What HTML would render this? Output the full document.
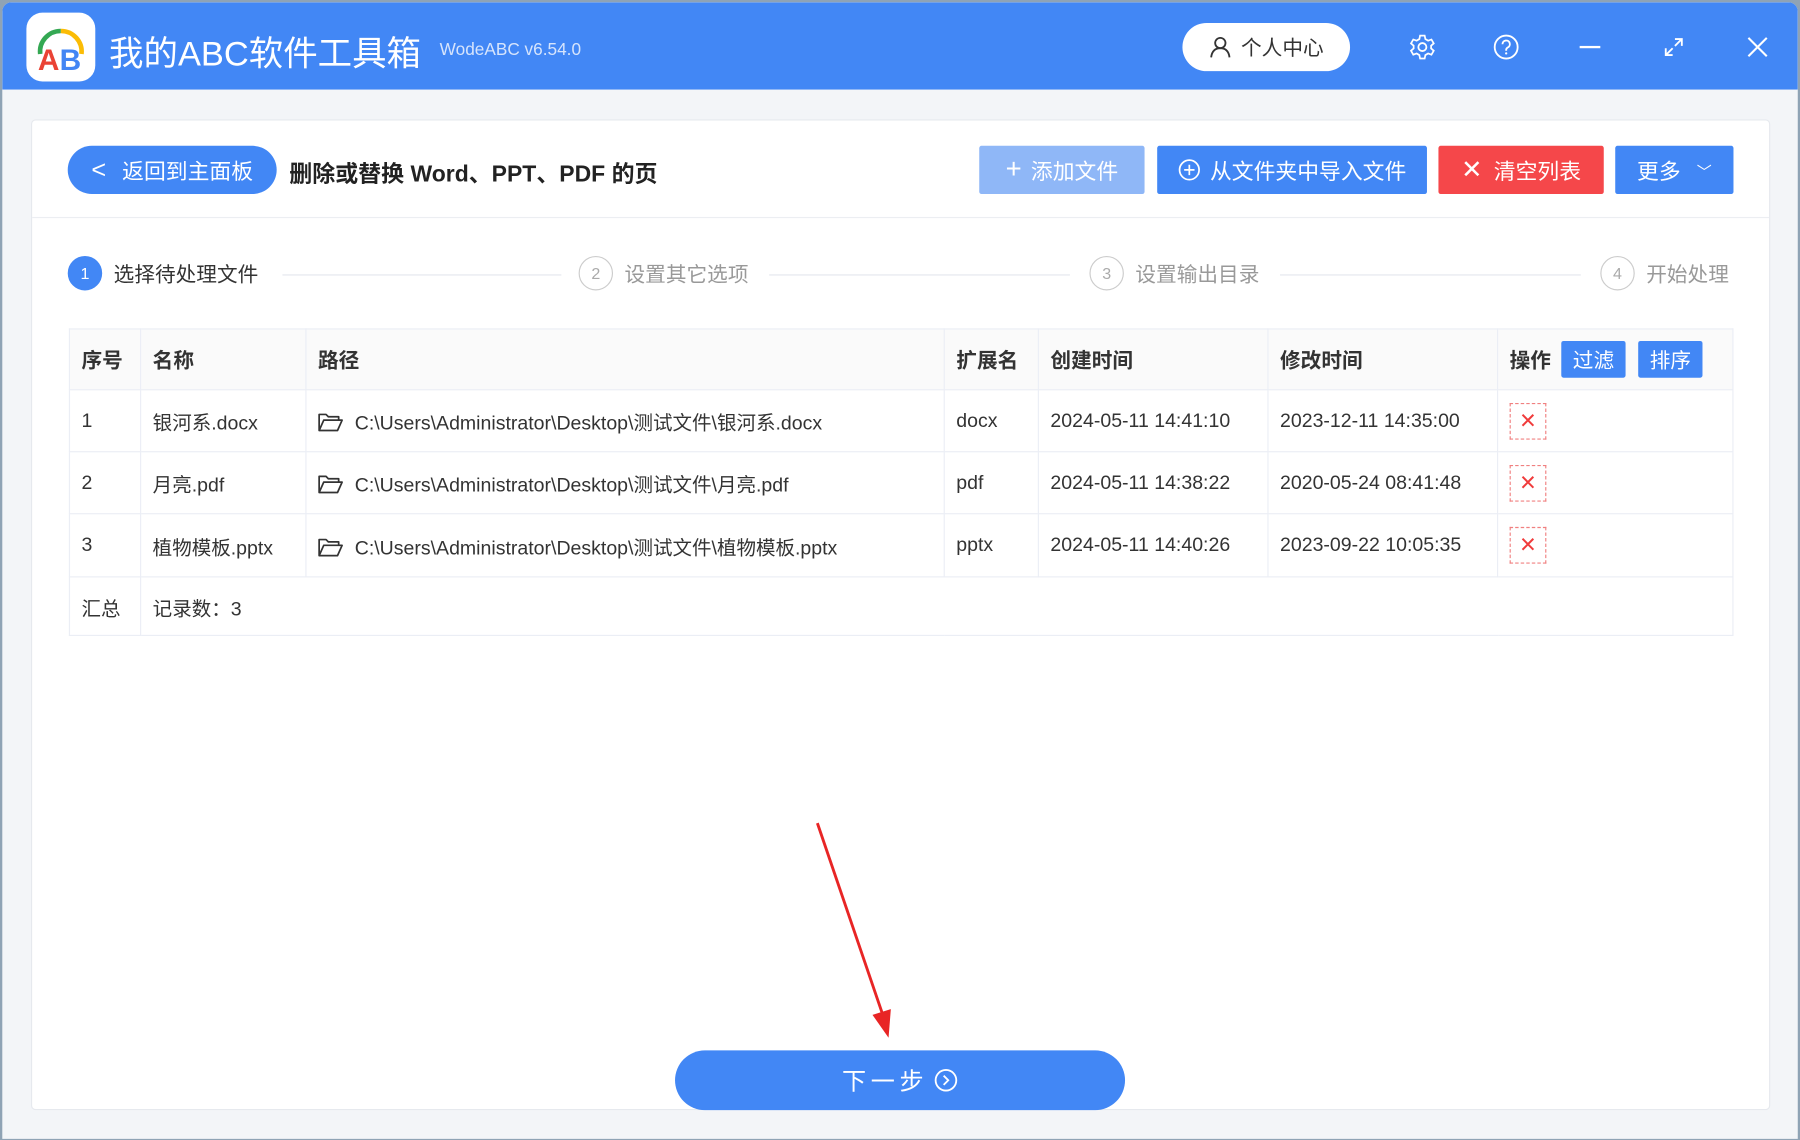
<!DOCTYPE html>
<html><head><meta charset="utf-8"><style>
*{margin:0;padding:0;box-sizing:border-box}
html,body{width:1800px;height:1140px;overflow:hidden;background:#8fa3b5}
#w{width:1568px;height:993px;transform:scale(1.148);transform-origin:0 0;position:relative;font-family:"Liberation Sans","Noto Sans CJK SC",sans-serif;color:#333}
.win{position:absolute;left:2px;top:2px;width:1564px;height:990px;background:#f3f5f8;border-radius:8px 8px 0 0;overflow:hidden}
.hd{position:absolute;left:0;top:0;width:100%;height:76px;background:#4287f5}
.abs{position:absolute}
.card{position:absolute;left:25px;top:102px;width:1515px;height:863px;background:#fff;border:1px solid #e6e9ee;border-radius:4px}
.btn{position:absolute;height:42px;color:#fff;font-size:19px;display:flex;align-items:center;justify-content:center;border-radius:2px}
table{position:absolute;left:58px;top:284px;border-collapse:collapse;font-size:17px;color:#333}
td{border:1px solid #ebeef5;padding:0 10px;white-space:nowrap}
th{border:1px solid #ebeef5;padding:0 10px;text-align:left;font-weight:bold;background:#fafafa;height:53px;font-size:18px}
.x{display:inline-block;width:32px;height:32px;border:1px dashed #f08080;color:#f03b3b;text-align:center;line-height:30px;font-size:24px;vertical-align:middle}
.step{position:absolute;top:221px;font-size:18px;color:#999;display:flex;align-items:center}
.c{width:30px;height:30px;border-radius:50%;border:1px solid #ccc;display:inline-flex;align-items:center;justify-content:center;font-size:14px;margin-right:10px;color:#aaa}
.line{position:absolute;top:237px;height:1px;background:#e4e7ed}
.f{display:inline-block;vertical-align:-3px;margin-right:10px}
</style></head><body><div id="w"><div class="win">
<div class="hd">
 <div class="abs" style="left:21px;top:9px;width:60px;height:60px;background:#fff;border-radius:14px">
  <svg width="60" height="60" viewBox="0 0 60 60"><path d="M12 36 A18 18 0 0 1 30 16" stroke="#34a853" stroke-width="4" fill="none"/><path d="M30 16 A18 18 0 0 1 48 36" stroke="#fbbc05" stroke-width="4" fill="none"/><text x="10" y="50" font-size="26" font-weight="bold" fill="#ea4335" font-family="Liberation Sans">A</text><text x="29" y="50" font-size="26" font-weight="bold" fill="#4285f4" font-family="Liberation Sans">B</text></svg>
 </div>
 <div class="abs" style="left:93px;top:20px;font-size:30px;color:#fff">我的ABC软件工具箱</div>
 <div class="abs" style="left:381px;top:33px;font-size:15px;color:#d6e4fc">WodeABC v6.54.0</div>
 <div class="abs" style="left:1028px;top:18px;width:146px;height:42px;background:#fff;border-radius:21px;font-size:18px;color:#333;display:flex;align-items:center;justify-content:center">
  <svg width="20" height="20" viewBox="0 0 20 20" style="margin-right:8px"><circle cx="10" cy="6.5" r="4.5" stroke="#333" stroke-width="1.6" fill="none"/><path d="M2 19 Q3 11 10 11 Q17 11 18 19" stroke="#333" stroke-width="1.6" fill="none"/></svg>个人中心</div>
 <svg class="abs" style="left:1225px;top:27px" width="24" height="24" viewBox="0 0 24 24"><circle cx="12" cy="12" r="3.5" stroke="#fff" stroke-width="1.6" fill="none"/><path d="M10 2h4l.6 3 2.4 1.4 2.9-1 2 3.4-2.3 2v2.4l2.3 2-2 3.4-2.9-1L14.6 19 14 22h-4l-.6-3L7 17.6l-2.9 1-2-3.4 2.3-2v-2.4l-2.3-2 2-3.4 2.9 1L9.4 5z" stroke="#fff" stroke-width="1.5" fill="none"/></svg>
 <svg class="abs" style="left:1298px;top:27px" width="24" height="24" viewBox="0 0 24 24"><circle cx="12" cy="12" r="10" stroke="#fff" stroke-width="1.6" fill="none"/><path d="M8.8 9.5a3.2 3.2 0 1 1 4.5 2.9c-.9.5-1.3 1-1.3 2v.8" stroke="#fff" stroke-width="1.6" fill="none"/><circle cx="12" cy="17.5" r="1" fill="#fff"/></svg>
 <div class="abs" style="left:1374px;top:38px;width:18px;height:2px;background:#fff"></div>
 <svg class="abs" style="left:1446px;top:29px" width="20" height="20" viewBox="0 0 20 20"><path d="M11 3h6v6M17 3l-6 6M9 17H3v-6M3 17l6-6" stroke="#fff" stroke-width="1.6" fill="none"/></svg>
 <svg class="abs" style="left:1519px;top:29px" width="20" height="20" viewBox="0 0 20 20"><path d="M2 2l16 16M18 2L2 18" stroke="#fff" stroke-width="1.8"/></svg>
</div>
<div class="card"></div>
<div class="abs" style="left:26px;top:187px;width:1513px;height:1px;background:#eceef2"></div>
<div class="btn" style="left:57px;top:125px;width:182px;border-radius:21px;background:#4287f5;font-size:19px"><span style="margin-right:14px;font-size:22px">&lt;</span>返回到主面板</div>
<div class="abs" style="left:250px;top:133px;font-size:20px;font-weight:bold;color:#222">删除或替换 Word、PPT、PDF 的页</div>
<div class="btn" style="left:851px;top:125px;width:144px;background:#8fb7f7"><span style="font-size:24px;margin-right:8px">+</span>添加文件</div>
<div class="btn" style="left:1006px;top:125px;width:235px;background:#4287f5"><svg width="20" height="20" viewBox="0 0 20 20" style="margin-right:8px"><circle cx="10" cy="10" r="8.5" stroke="#fff" stroke-width="1.5" fill="none"/><path d="M10 5.5v9M5.5 10h9" stroke="#fff" stroke-width="1.5"/></svg>从文件夹中导入文件</div>
<div class="btn" style="left:1251px;top:125px;width:144px;background:#f5474a"><span style="font-size:22px;margin-right:10px">✕</span>清空列表</div>
<div class="btn" style="left:1405px;top:125px;width:103px;background:#4287f5">更多<span style="margin-left:14px;font-size:13px">﹀</span></div>

<div class="step" style="left:57px;color:#333"><span class="c" style="background:#4287f5;border-color:#4287f5;color:#fff">1</span>选择待处理文件</div>
<div class="line" style="left:244px;width:243px"></div>
<div class="step" style="left:502px"><span class="c">2</span>设置其它选项</div>
<div class="line" style="left:668px;width:262px"></div>
<div class="step" style="left:947px"><span class="c">3</span>设置输出目录</div>
<div class="line" style="left:1113px;width:262px"></div>
<div class="step" style="left:1392px"><span class="c">4</span>开始处理</div>

<table>
<tr><th style="width:62px">序号</th><th style="width:144px">名称</th><th style="width:556px">路径</th><th style="width:82px">扩展名</th><th style="width:200px">创建时间</th><th style="width:200px">修改时间</th><th style="width:205px">操作 <span style="display:inline-block;background:#4287f5;color:#fff;font-weight:normal;padding:3px 10px;border-radius:2px;margin-left:4px">过滤</span> <span style="display:inline-block;background:#4287f5;color:#fff;font-weight:normal;padding:3px 10px;border-radius:2px;margin-left:6px">排序</span></th></tr>
<tr style="height:54px"><td>1</td><td>银河系.docx</td><td><svg class="f" width="22" height="18" viewBox="0 0 22 18"><path d="M1 16V2h6l2 2h9v3M1 16l4-9h16l-4 9z" stroke="#333" stroke-width="1.5" fill="none" stroke-linejoin="round"/></svg>C:\Users\Administrator\Desktop\测试文件\银河系.docx</td><td>docx</td><td>2024-05-11 14:41:10</td><td>2023-12-11 14:35:00</td><td><span class="x">×</span></td></tr>
<tr style="height:54px"><td>2</td><td>月亮.pdf</td><td><svg class="f" width="22" height="18" viewBox="0 0 22 18"><path d="M1 16V2h6l2 2h9v3M1 16l4-9h16l-4 9z" stroke="#333" stroke-width="1.5" fill="none" stroke-linejoin="round"/></svg>C:\Users\Administrator\Desktop\测试文件\月亮.pdf</td><td>pdf</td><td>2024-05-11 14:38:22</td><td>2020-05-24 08:41:48</td><td><span class="x">×</span></td></tr>
<tr style="height:55px"><td>3</td><td>植物模板.pptx</td><td><svg class="f" width="22" height="18" viewBox="0 0 22 18"><path d="M1 16V2h6l2 2h9v3M1 16l4-9h16l-4 9z" stroke="#333" stroke-width="1.5" fill="none" stroke-linejoin="round"/></svg>C:\Users\Administrator\Desktop\测试文件\植物模板.pptx</td><td>pptx</td><td>2024-05-11 14:40:26</td><td>2023-09-22 10:05:35</td><td><span class="x">×</span></td></tr>
<tr style="height:51px"><td>汇总</td><td colspan="6" style="border-left:1px solid #ebeef5">记录数：3</td></tr>
</table>

<svg class="abs" style="left:700px;top:710px" width="90" height="200" viewBox="0 0 90 200"><line x1="10" y1="5" x2="68" y2="175" stroke="#e82525" stroke-width="2.5"/><path d="M58 172 L72 192 L74 167z" fill="#e82525"/></svg>
<div class="btn" style="left:586px;top:913px;width:392px;height:52px;border-radius:26px;background:#4287f5;font-size:21px;letter-spacing:4px">下一步 <svg width="22" height="22" viewBox="0 0 22 22" style="margin-left:4px"><circle cx="11" cy="11" r="9" stroke="#fff" stroke-width="1.6" fill="none"/><path d="M9 7l4 4-4 4" stroke="#fff" stroke-width="1.6" fill="none"/></svg></div>
</div></div></body></html>
